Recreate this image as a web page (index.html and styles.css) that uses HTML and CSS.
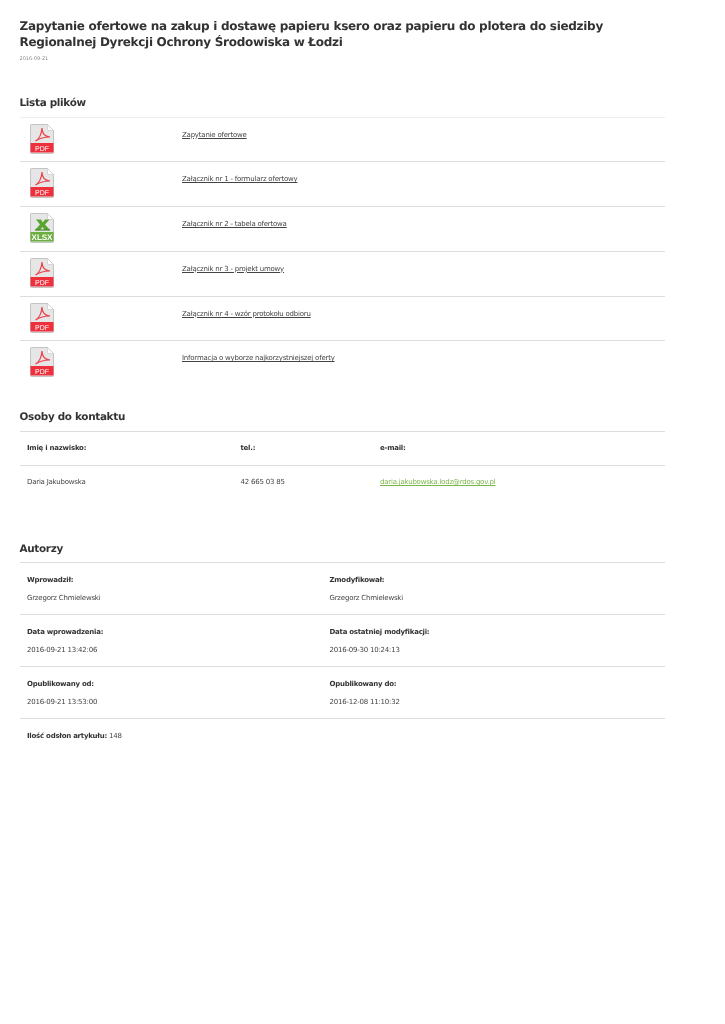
FILE: index.html
```html
<!DOCTYPE html>
<html lang="pl">
<head>
<meta charset="utf-8">
<title>Zapytanie ofertowe</title>
<link rel="stylesheet" href="styles.css">
</head>
<body>
<svg class="defs" width="0" height="0" aria-hidden="true">
  <defs>
    <symbol id="sheet" viewBox="0 0 24 30">
      <path d="M.5 1.2Q.5.5 1.2.5H17.5L23.5 6.5V28.5Q23.5 29.5 22.5 29.5H1.5Q.5 29.5.5 28.5Z" fill="#e6e6e6" stroke="#c4c4c4"/>
      <path d="M17.5.5V5.5Q17.5 6.5 18.5 6.5H23.5Z" fill="#fff" stroke="#c8c8c8" stroke-width=".7"/>
    </symbol>
    <symbol id="pdf" viewBox="0 0 24 30">
      <use href="#sheet"/>
      <path d="M5.5 17C9 15 11.5 10 12 4C12 9 15 12.5 20 13C15.5 13 10 14 5.5 17Z" fill="none" stroke="#e8454e" stroke-width="1.2"/>
      <rect x=".5" y="19" width="23" height="9.5" fill="#ee2f3c"/>
      <text x="12" y="26.6" class="badge">PDF</text>
    </symbol>
    <symbol id="xlsx" viewBox="0 0 24 30">
      <use href="#sheet"/>
      <path d="M6 6.5H11L12.8 9.5L15 6.5H19.5L15 11.5L20 17H14.5L12.6 14L10 17H5L10 11.5Z" fill="#5aa532"/>
      <path d="M5 17H20" stroke="#3f8a22" stroke-width="1.2"/>
      <rect x=".5" y="19" width="23" height="9.5" fill="#6cae3f"/>
      <text x="12" y="26.8" class="badge badge-x">XLSX</text>
    </symbol>
  </defs>
</svg>
<main class="page">
  <h1 class="title">Zapytanie ofertowe na zakup i dostawę papieru ksero oraz papieru do plotera do siedziby Regionalnej Dyrekcji Ochrony Środowiska w Łodzi</h1>
  <p class="date">2016-09-21</p>

  <h2 class="heading heading-files">Lista plików</h2>
  <ul class="files">
    <li class="file"><svg class="icon" viewBox="0 0 24 30"><use href="#pdf"/></svg><a href="#">Zapytanie ofertowe</a></li>
    <li class="file"><svg class="icon" viewBox="0 0 24 30"><use href="#pdf"/></svg><a href="#">Załącznik nr 1 - formularz ofertowy</a></li>
    <li class="file"><svg class="icon" viewBox="0 0 24 30"><use href="#xlsx"/></svg><a href="#">Załącznik nr 2 - tabela ofertowa</a></li>
    <li class="file"><svg class="icon" viewBox="0 0 24 30"><use href="#pdf"/></svg><a href="#">Załącznik nr 3 - projekt umowy</a></li>
    <li class="file"><svg class="icon" viewBox="0 0 24 30"><use href="#pdf"/></svg><a href="#">Załącznik nr 4 - wzór protokołu odbioru</a></li>
    <li class="file"><svg class="icon" viewBox="0 0 24 30"><use href="#pdf"/></svg><a href="#">Informacja o wyborze najkorzystniejszej oferty</a></li>
  </ul>

  <h2 class="heading heading-contacts">Osoby do kontaktu</h2>
  <div class="contacts">
    <div class="contact-row contact-head"><b>Imię i nazwisko:</b><b>tel.:</b><b>e-mail:</b></div>
    <div class="contact-row"><span>Daria Jakubowska</span><span>42 665 03 85</span><a class="mail" href="#">daria.jakubowska.lodz@rdos.gov.pl</a></div>
  </div>

  <h2 class="heading heading-authors">Autorzy</h2>
  <div class="authors">
    <div class="author-row"><div class="cell"><b>Wprowadził:</b><span>Grzegorz Chmielewski</span></div><div class="cell"><b>Zmodyfikował:</b><span>Grzegorz Chmielewski</span></div></div>
    <div class="author-row"><div class="cell"><b>Data wprowadzenia:</b><span>2016-09-21 13:42:06</span></div><div class="cell"><b>Data ostatniej modyfikacji:</b><span>2016-09-30 10:24:13</span></div></div>
    <div class="author-row"><div class="cell"><b>Opublikowany od:</b><span>2016-09-21 13:53:00</span></div><div class="cell"><b>Opublikowany do:</b><span>2016-12-08 11:10:32</span></div></div>
    <p class="views"><b>Ilość odsłon artykułu:</b> 148</p>
  </div>
</main>
</body>
</html>
```
FILE: styles.css
```css
* { box-sizing: border-box; }
html, body { margin: 0; padding: 0; background: #fff; }
body { font-family: "DejaVu Sans", sans-serif; font-size: 7px; letter-spacing: -.22px; line-height: 11px; color: #444; text-rendering: geometricPrecision; }
b { color: #333; font-weight: 700; letter-spacing: -.25px; }
.defs { position: absolute; }
.page { width: 645.5px; margin-left: 19.5px; padding-top: 17.5px; filter: blur(.25px); }
.title { margin: 0; font-size: 12px; letter-spacing: -.3px; line-height: 16.5px; font-weight: 700; color: #333; }
.date { margin: 4px 0 0; font-size: 4.95px; letter-spacing: 0; line-height: 9px; color: #888; }
.heading { margin: 0; font-size: 10.4px; letter-spacing: -.3px; line-height: 14px; font-weight: 700; color: #333; }
.heading-files { margin-top: 32px; padding-bottom: 7px; }
.heading-contacts { margin-top: 25px; padding-bottom: 7px; }
.heading-authors { margin-top: 42.5px; padding-bottom: 6.5px; }
.files { list-style: none; margin: 0; padding: 0; }
.file { display: grid; grid-template-columns: 152px 1fr; height: 44.75px; padding: 6px 0 0 10.5px; border-top: 1px solid #ddd; }
.file:first-child { border-top-color: #eee; }
.file a { color: #444; margin-top: 6px; justify-self: start; }
.icon { display: block; width: 24px; height: 30px; }
.badge { font: 400 7px "Liberation Sans", sans-serif; letter-spacing: 0; fill: #fff; text-anchor: middle; }
.badge-x { font-size: 8px; font-weight: 700; }
.contacts { border-top: 1px solid #ddd; }
.contact-row { display: grid; grid-template-columns: 213.5px 139.5px 1fr; height: 33.5px; padding: 11px 7.5px 0; }
.contact-row + .contact-row { padding-top: 11.5px; }
.contact-head { border-bottom: 1px solid #ddd; }
.mail { color: #7ab648; }
.authors { border-top: 1px solid #ddd; }
.author-row { display: grid; grid-template-columns: 302.5px 1fr; height: 52px; padding: 11.5px 7.5px 0; border-bottom: 1px solid #ddd; }
.cell { display: flex; flex-direction: column; gap: 7px; }
.views { margin: 0; padding: 11.5px 7.5px 0; }
```
